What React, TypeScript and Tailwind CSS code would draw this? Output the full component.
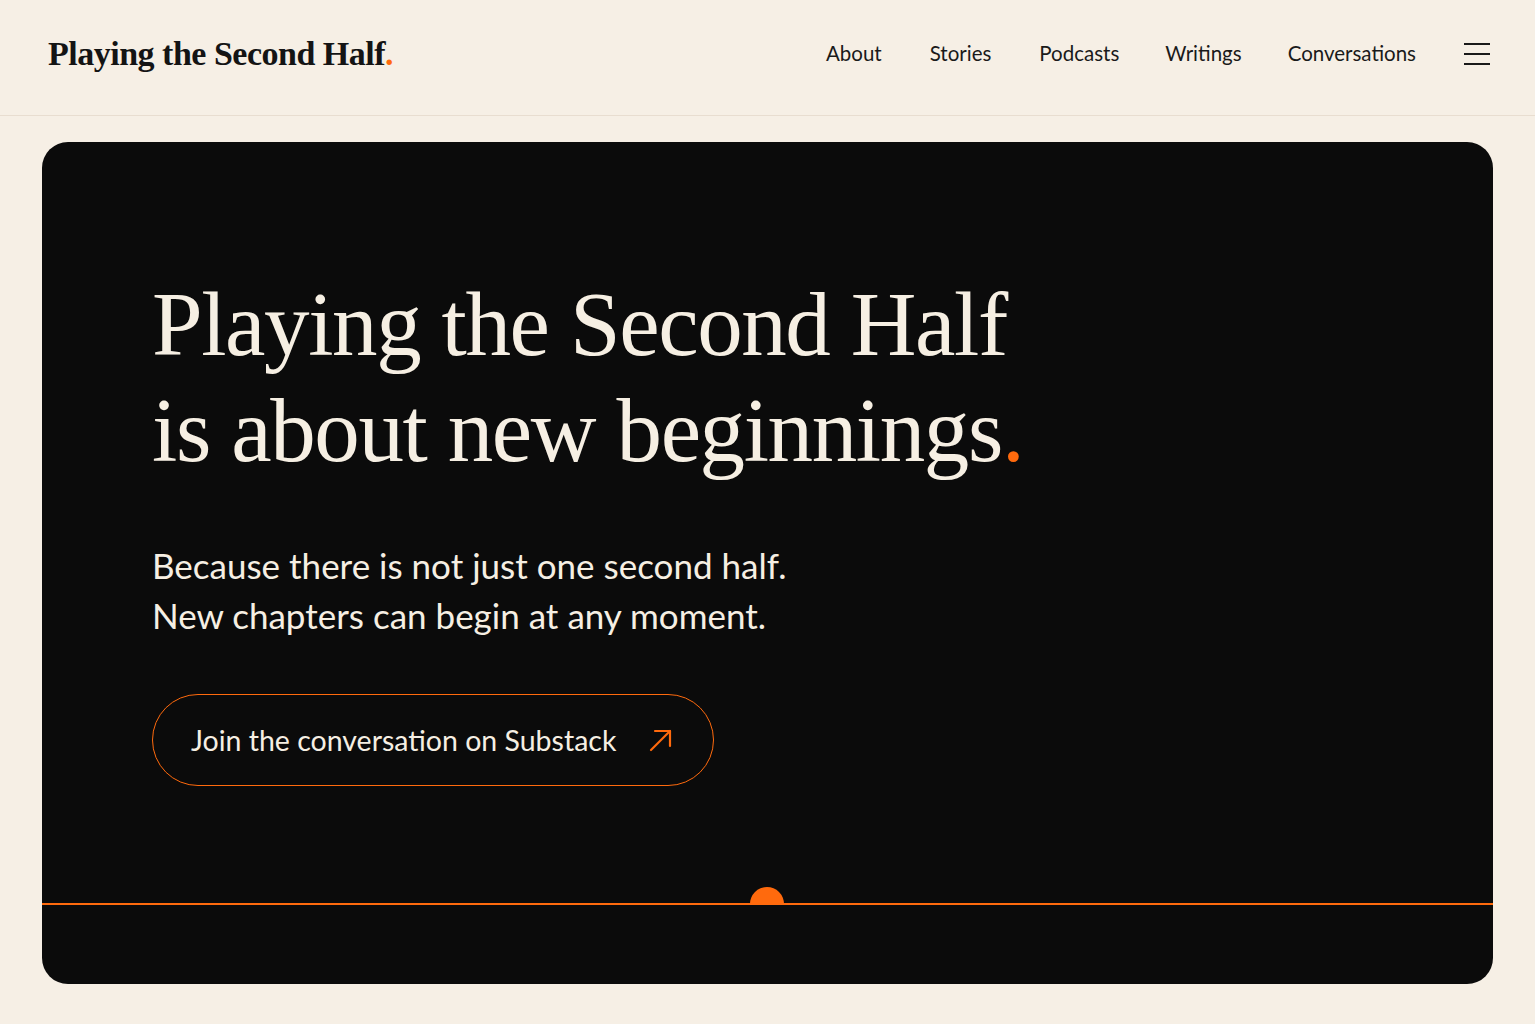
const serif = { fontFamily: '"Liberation Serif", "DejaVu Serif", serif' }

export default function App() {
  return (
    <div className="min-h-screen bg-[#f6efe5] text-[#141414]">
      <header className="flex h-[116px] items-center justify-between border-b border-[#e8ddd0] pb-[8px] pl-[48px] pr-[45px]">
        <a
          href="#"
          className="text-[34px] font-bold tracking-[-0.5px] text-[#141414]"
          style={serif}
        >
          Playing the Second Half
          <span className="text-[#ff6a0d]">.</span>
        </a>
        <nav className="flex items-center font-['Lato',sans-serif] text-[20.5px] text-[#1a1a1a]">
          <a href="#" className="mr-[48px]">About</a>
          <a href="#" className="mr-[48px]">Stories</a>
          <a href="#" className="mr-[46px]">Podcasts</a>
          <a href="#" className="mr-[46px]">Writings</a>
          <a href="#" className="mr-[48px]">Conversations</a>
          <button className="flex flex-col gap-[8px]" aria-label="Menu">
            <span className="block h-[2px] w-[26px] bg-[#1a1a1a]" />
            <span className="block h-[2px] w-[26px] bg-[#1a1a1a]" />
            <span className="block h-[2px] w-[26px] bg-[#1a1a1a]" />
          </button>
        </nav>
      </header>

      <main className="px-[42px] pt-[26px] pb-[40px]">
        <section className="relative h-[842px] overflow-hidden rounded-[26px] bg-[#0b0b0b]">
          <div className="pl-[110px] pt-[130px]">
            <h1
              className="text-[91px] leading-[106px] tracking-[-1.4px] text-[#f6efe3]"
              style={serif}
            >
              Playing the Second Half
              <br />
              is about new beginnings<span className="text-[#ff6a0d]">.</span>
            </h1>
            <p className="mt-[56px] font-['Lato',sans-serif] text-[35px] leading-[50px] text-[#f6efe3]">
              Because there is not just one second half.
              <br />
              New chapters can begin at any moment.
            </p>
            <a
              href="#"
              className="mt-[54px] inline-flex h-[92px] w-[562px] items-center justify-between rounded-full border border-[#ff6a0d] pl-[38px] pr-[40px] font-['Lato',sans-serif] text-[28.5px] text-[#f6efe3]"
            >
              Join the conversation on Substack
              <svg
                width="24"
                height="24"
                viewBox="0 0 24 24"
                fill="none"
                stroke="#ff6a0d"
                strokeWidth="2.2"
                strokeLinecap="round"
                strokeLinejoin="round"
              >
                <path d="M2 22 L21 3" />
                <path d="M6 3 H21 V18" />
              </svg>
            </a>
          </div>
          <div className="absolute left-0 right-0 top-[761px] h-[2px] bg-[#ff6a0d]" />
          <div className="absolute left-[708px] top-[745px] h-[17px] w-[34px] rounded-t-full bg-[#ff6a0d]" />
        </section>
      </main>
    </div>
  )
}
